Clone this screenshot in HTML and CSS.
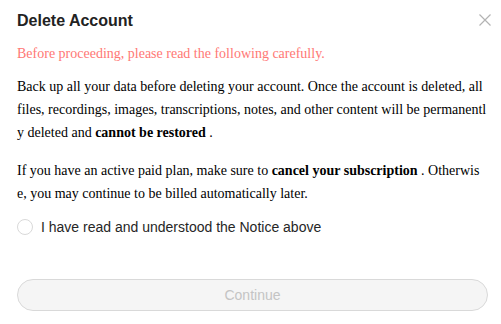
FILE: index.html
```html
<!DOCTYPE html>
<html lang="en">
<head>
    <meta charset="UTF-8">
    <title>Delete Account</title>
    <link rel="stylesheet" href="styles.css">
</head>
<body>
    <div class="modal">
        <div class="modal-header">
            <h2 class="modal-title">Delete Account</h2>
            <button class="close-btn" aria-label="Close">
                <svg width="12" height="12" viewBox="0 0 12 12">
                    <path d="M0.5 0.5 L11.5 11.5 M11.5 0.5 L0.5 11.5" stroke="#b3b3b3" stroke-width="1.2" fill="none"/>
                </svg>
            </button>
        </div>

        <p class="warning">Before proceeding, please read the following carefully.</p>

        <p class="notice">Back up all your data before deleting your account. Once the account is deleted, all files, recordings, images, transcriptions, notes, and other content will be permanently deleted and <b>cannot be restored</b> .</p>

        <p class="notice">If you have an active paid plan, make sure to <b>cancel your subscription</b> . Otherwise, you may continue to be billed automatically later.</p>

        <label class="confirm">
            <span class="radio"></span>
            <span>I have read and understood the Notice above</span>
        </label>

        <button class="continue-btn" disabled>Continue</button>
    </div>
</body>
</html>
```

FILE: styles.css
```css
* {
    margin: 0;
    padding: 0;
    box-sizing: border-box;
}

body {
    background: #fff;
    font-family: "Liberation Sans", Arial, sans-serif;
    color: #262626;
}

.modal {
    width: 501px;
    padding: 9px 13px 13px 17px;
}

.modal-header {
    display: flex;
    justify-content: space-between;
    align-items: center;
    height: 24px;
}

.modal-title {
    font-size: 16px;
    font-weight: bold;
    line-height: 24px;
    color: #222;
}

.close-btn {
    border: none;
    background: none;
    width: 12px;
    height: 12px;
    margin-right: -3px;
    margin-top: -2px;
    display: flex;
    cursor: pointer;
}

.warning {
    margin-top: 10px;
    font-family: "Liberation Serif", "Times New Roman", serif;
    font-size: 14px;
    line-height: 22px;
    color: #ff7875;
}

.notice {
    margin-top: 10px;
    font-family: "Liberation Serif", "Times New Roman", serif;
    font-size: 14px;
    line-height: 23px;
    color: #000;
    word-break: break-all;
}

.notice + .notice {
    margin-top: 15px;
}

.confirm {
    margin-top: 11px;
    display: flex;
    align-items: center;
    gap: 8px;
    height: 22px;
    font-size: 14px;
    color: #262626;
}

.radio {
    width: 16px;
    height: 16px;
    border: 1px solid #d9d9d9;
    border-radius: 50%;
    background: #fff;
}

.continue-btn {
    display: block;
    width: 100%;
    height: 32px;
    margin-top: 41px;
    border: 1px solid #d9d9d9;
    border-radius: 16px;
    background: #f5f5f5;
    color: #c4c4c4;
    font-family: "Liberation Sans", Arial, sans-serif;
    font-size: 14px;
}
```
